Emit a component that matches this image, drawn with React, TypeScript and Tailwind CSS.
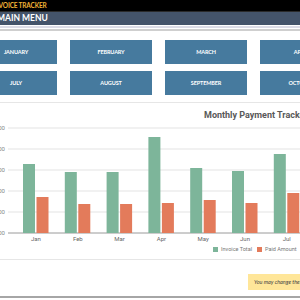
import React from "react";

const rowOne = ["DECEMBER", "JANUARY", "FEBRUARY", "MARCH", "APRIL"];
const rowTwo = ["JUNE", "JULY", "AUGUST", "SEPTEMBER", "OCTOBER"];

// bar heights in px, read off the reference
const data = [
  { m: "Jan", inv: 69, paid: 36 },
  { m: "Feb", inv: 61, paid: 29 },
  { m: "Mar", inv: 61, paid: 29 },
  { m: "Apr", inv: 96, paid: 30 },
  { m: "May", inv: 65, paid: 33 },
  { m: "Jun", inv: 62, paid: 30 },
  { m: "Jul", inv: 79, paid: 40 },
  { m: "Aug", inv: 70, paid: 35 },
];

const ticks = ["$500.00", "$400.00", "$300.00", "$200.00", "$100.00", "$0.00"];

function MonthButton({ label }: { label: string }) {
  return (
    <div className="w-[82px] h-[24px] shrink-0 bg-[#467a9e] flex items-center justify-center text-white font-bold text-[5.5px] tracking-tight">
      {label}
    </div>
  );
}

function Chart() {
  return (
    <svg width="300" height="124" className="block" style={{ fontFamily: "Roboto, sans-serif" }}>
      {ticks.map((t, i) => {
        const y = 7 + i * 21;
        return (
          <g key={t}>
            <line x1={8} x2={300} y1={y} y2={y} stroke={i === 5 ? "#9a9a9a" : "#e3e3e3"} strokeWidth={1} />
            <text x={5} y={y + 2} fontSize={6} fill="#888" textAnchor="end">
              {t}
            </text>
          </g>
        );
      })}
      {data.map((d, i) => {
        const x = 23 + i * 41.8;
        return (
          <g key={d.m}>
            <rect x={x} y={112 - d.inv} width={12} height={d.inv} fill="#7db59a" />
            <rect x={x + 13.5} y={112 - d.paid} width={12} height={d.paid} fill="#e37b5b" />
            <text x={x + 13} y={120} fontSize={6} fill="#666" textAnchor="middle">
              {d.m}
            </text>
          </g>
        );
      })}
    </svg>
  );
}

export default function App() {
  return (
    <div className="w-[300px] h-[300px] overflow-hidden bg-white" style={{ fontFamily: "Lato, 'Open Sans', sans-serif" }}>
      {/* header */}
      <div className="h-[12px] bg-black border-b border-[#2a2a2a] flex items-center">
        <span className="-ml-[8px] text-[6.5px] font-bold text-[#f0b236] tracking-tight whitespace-nowrap">
          INVOICE TRACKER
        </span>
      </div>
      <div className="h-[13px] bg-[#44546a] flex items-center">
        <span className="-ml-[3px] text-[8.5px] font-bold text-white whitespace-nowrap">MAIN MENU</span>
      </div>
      <div className="h-[1px] bg-white" />
      <div className="h-[2px] bg-[#dcdce6]" />
      <div className="h-[1px] bg-white" />
      <div className="h-[2px] bg-[#cfcfcf]" />

      {/* month buttons */}
      <div className="mt-[9px] flex flex-col gap-[7px]">
        <div className="flex gap-[13px] -ml-[120px]">
          {rowOne.map((m) => (
            <MonthButton key={m} label={m} />
          ))}
        </div>
        <div className="flex gap-[13px] -ml-[120px]">
          {rowTwo.map((m) => (
            <MonthButton key={m} label={m} />
          ))}
        </div>
      </div>

      <div className="mt-[7px] h-[1px] bg-[#e6e6e6]" />

      {/* chart */}
      <div className="h-[18px] pt-[6px] pl-[204px] whitespace-nowrap text-[9px] leading-[12px] font-bold text-[#595959]" style={{ fontFamily: "Roboto, sans-serif" }}>
        Monthly Payment Tracker
      </div>
      <Chart />
      <div className="h-[8px] flex items-center gap-[3px] pl-[213px] whitespace-nowrap text-[5.5px] text-[#777]" style={{ fontFamily: "Roboto, sans-serif" }}>
        <span className="w-[5px] h-[5px] bg-[#7db59a]" />
        <span className="mr-[2px]">Invoice Total</span>
        <span className="w-[5px] h-[5px] bg-[#e37b5b]" />
        <span>Paid Amount</span>
      </div>

      <div className="mt-[6px] h-[1px] bg-[#e6e6e6]" />

      {/* note */}
      <div className="mt-[14px] flex justify-end -mr-[60px]">
        <div className="w-[112px] h-[16px] bg-[#ffe699] flex items-center pl-[6px] whitespace-nowrap overflow-hidden">
          <span className="text-[5.5px] italic text-[#444]">You may change the values in the table</span>
        </div>
      </div>
      <div className="mt-[6px] h-[2px] bg-[#a6a6a6]" />
    </div>
  );
}
